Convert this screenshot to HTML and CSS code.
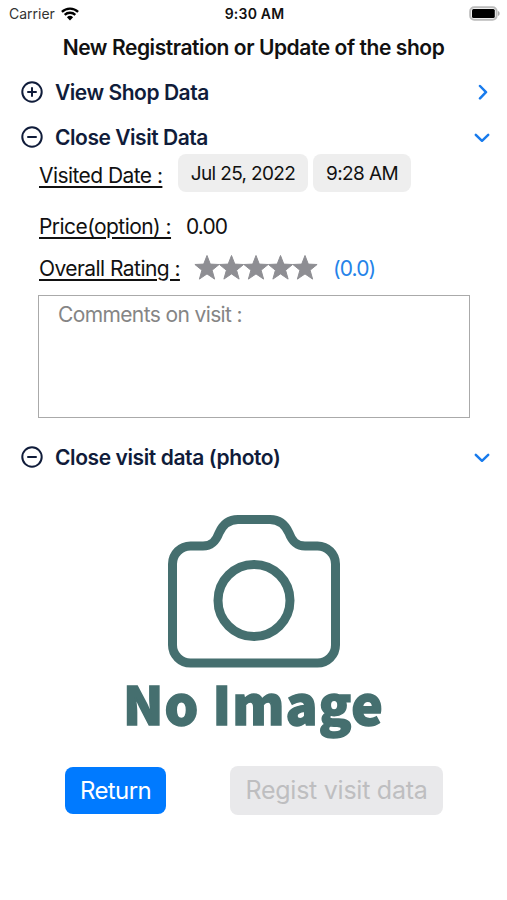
FILE: index.html
```html
<!DOCTYPE html>
<html lang="en">
<head>
<meta charset="utf-8">
<title>Shop visit</title>
<link rel="stylesheet" href="styles.css">
</head>
<body>
<header class="status">
  <div class="carrier"><span class="carrier-name">Carrier</span>
    <svg width="18" height="14" viewBox="0 0 18 14" fill="none" stroke="#000" stroke-width="2.3"><path d="M.9 4.9a11.6 11.6 0 0 1 16.2 0M3.7 7.9a7.6 7.6 0 0 1 10.6 0"/><path d="M9 13.6 5.9 10.3a4.5 4.5 0 0 1 6.2 0z" fill="#000" stroke="none"/></svg>
  </div>
  <span class="clock">9:30 AM</span>
  <svg class="battery" width="31" height="15" viewBox="0 0 31 15"><rect x="1.2" y="1.2" width="26.4" height="12.6" rx="4" fill="#fff" stroke="#bbb" stroke-width="2"/><rect x="3" y="3" width="22.8" height="9" rx="1.5" fill="#000"/><path d="M29 5v5c2.2-.7 2.2-4.3 0-5z" fill="#aaa"/></svg>
</header>
<h1 class="title">New Registration or Update of the shop</h1>
<main>
  <section class="section-head">
    <svg class="circle" viewBox="0 0 22 22"><circle cx="11" cy="11" r="9.7"/><path d="M7 11h8M11 7v8"/></svg>
    <h2 class="h-view">View Shop Data</h2>
    <svg class="chevron" viewBox="0 0 16 16"><path d="m6 2 6 6.2-6 6.2"/></svg>
  </section>
  <section class="section-head">
    <svg class="circle" viewBox="0 0 22 22"><circle cx="11" cy="11" r="9.7"/><path d="M7 11h8"/></svg>
    <h2 class="h-visit">Close Visit Data</h2>
    <svg class="chevron" viewBox="0 0 16 16"><path d="m1.8 5.8 6.2 6 6.2-6"/></svg>
  </section>
  <div class="field date-row">
    <span class="label l-date">Visited Date :</span>
    <span class="pill p-date">Jul 25, 2022</span>
    <span class="pill p-time">9:28 AM</span>
  </div>
  <div class="field price-row">
    <span class="label l-price">Price(option) :</span>
    <span class="price">0.00</span>
  </div>
  <div class="field rating-row">
    <span class="label l-rating">Overall Rating :</span>
    <svg class="stars" width="124" height="26" viewBox="0 0 124 26"><defs><path id="star" d="m13 .5 3.300 8.600 8.800.4-7 5.700 2.500 8.900-7.600-5.200-7.600 5.200 2.500-8.900-7-5.700 8.800-.4z"/></defs><g fill="#8e8e93" stroke="#8e8e93" stroke-width="1" stroke-linejoin="round"><use href="#star"/><use href="#star" x="24.5"/><use href="#star" x="49"/><use href="#star" x="73.5"/><use href="#star" x="98"/></g></svg>
    <span class="score">(0.0)</span>
  </div>
  <div class="comments">Comments on visit :</div>
  <section class="section-head photo-head">
    <svg class="circle" viewBox="0 0 22 22"><circle cx="11" cy="11" r="9.7"/><path d="M7 11h8"/></svg>
    <h2 class="h-photo">Close visit data (photo)</h2>
    <svg class="chevron" viewBox="0 0 16 16"><path d="m1.8 5.8 6.2 6 6.2-6"/></svg>
  </section>
  <figure class="photo">
    <svg width="172" height="154" viewBox="0 0 172 154" fill="none" stroke="#456f6f" stroke-width="9"><path d="M22.500 32H35c9 0 13-5 16-13 4-9 10-13.500 19-13.500h32c9 0 15 4.500 19 13.500 3 8 7 13 16 13h12.500a18 18 0 0 1 18 18v81a18 18 0 0 1-18 18h-127a18 18 0 0 1-18-18V50a18 18 0 0 1 18-18z"/><circle cx="86" cy="86.5" r="36"/></svg>
    <figcaption>No Image</figcaption>
  </figure>
  <div class="actions">
    <button class="btn return">Return</button>
    <button class="btn regist" disabled>Regist visit data</button>
  </div>
</main>
</body>
</html>
```
FILE: styles.css
```css
* { box-sizing: border-box; }
body { margin: 0; background: #fff; color: #111; font-family: Inter, "Liberation Sans", sans-serif; white-space: nowrap; }
svg { display: block; flex: none; }
h1, h2, figure { margin: 0; }
.status { display: grid; grid-template-columns: 1fr auto 1fr; align-items: center; height: 27px; padding: 0 7px 0 9px; font-size: 14px; }
.carrier { display: flex; align-items: center; gap: 6px; color: #333; }
.clock { font-weight: 600; letter-spacing: .2px; }
.battery { justify-self: end; }
.title { height: 43px; line-height: 42px; text-align: center; font-size: 21px; font-weight: 600; letter-spacing: -.43px; color: #111; }
.section-head { display: flex; align-items: center; height: 45px; padding: 0 17px 1px 21px; }
.section-head h2 { flex: 1; padding-top: 2px; font-size: 21px; font-weight: 600; line-height: 26px; letter-spacing: -.46px; color: #101c3a; }
.section-head .h-photo { letter-spacing: -.4px; }
.circle { width: 22px; height: 22px; margin-right: 12px; fill: none; stroke: #101c3a; stroke-width: 2; stroke-linecap: round; }
.chevron { width: 16px; height: 16px; fill: none; stroke: #187bed; stroke-width: 2.5; stroke-linecap: round; stroke-linejoin: round; }
.field { display: flex; align-items: center; padding-left: 39px; font-size: 21px; letter-spacing: -.56px; }
.label { text-decoration: underline; text-decoration-thickness: 1.5px; text-underline-offset: 3px; }
.date-row { height: 38px; margin-top: -6px; }
.l-date { width: 139px; padding-top: 4px; }
.pill { display: flex; align-items: center; justify-content: center; height: 38px; border-radius: 8px; background: #eee; font-size: 19px; letter-spacing: -.65px; }
.p-date { width: 130px; margin-right: 5px; }
.p-time { width: 98px; letter-spacing: -.6px; }
.price-row { height: 42px; margin-top: 13px; }
.l-price { width: 147px; }
.price { letter-spacing: -.9px; }
.rating-row { height: 42px; }
.l-rating { width: 155px; }
.stars { overflow: visible; margin-right: 15px; }
.score { color: #2583e9; letter-spacing: -.9px; }
.comments { width: 432px; height: 123px; margin: 6px 0 0 38px; padding: 6px 19px; border: 1px solid #aaa; font-size: 21px; line-height: 25px; letter-spacing: -.62px; color: #858585; }
.photo-head { margin-top: 17px; }
.photo { height: 254px; padding-top: 34px; display: flex; flex-direction: column; align-items: center; }
.photo figcaption { margin-top: -4px; font: 900 53px/76px "Noto Sans CJK JP", "Noto Sans", sans-serif; color: #456f6f; -webkit-text-stroke: 1.5px #456f6f; letter-spacing: 1.1px; }
.actions { display: flex; align-items: center; height: 50px; margin-top: 31px; padding-left: 65px; }
.btn { display: flex; align-items: center; justify-content: center; padding: 0; border: 0; border-radius: 8px; font-family: inherit; }
.return { width: 101px; height: 47px; background: #007aff; color: #fff; font-size: 24px; letter-spacing: -.6px; }
.regist { width: 213px; height: 49px; margin-left: 64px; background: #e9e9eb; color: #bebec0; font-size: 25px; letter-spacing: -.25px; }
```
